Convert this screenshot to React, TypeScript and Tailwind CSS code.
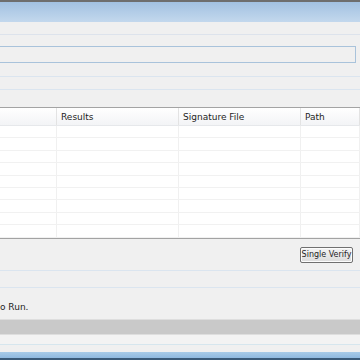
import React from "react";

const cols = [
  { label: "", w: "w-[57px]" },
  { label: "Results", w: "w-[122px]" },
  { label: "Signature File", w: "w-[122px]" },
  { label: "Path", w: "flex-1" },
];

const rows = Array.from({ length: 9 });

export default function App() {
  return (
    <div
      className="w-[360px] h-[360px] overflow-hidden flex flex-col bg-[#f0f0f0] text-[9px] text-[#1e1e1e]"
      style={{ fontFamily: "'DejaVu Sans', 'Liberation Sans', sans-serif" }}
    >
      {/* window top */}
      <div className="h-[2px] bg-[#6e6e6e]" />
      <div className="h-[20px] bg-gradient-to-b from-[#a2c1e1] to-[#c3d8ed]" />

      {/* form area */}
      <div className="h-[12px]" />
      <div className="h-px bg-[#dde3ec]" />
      <div className="h-[11px]" />
      <div className="h-[17px] mr-[4px] border border-[#a9c3db] border-l-0 bg-[#f0f0f0]" />
      <div className="h-[13px]" />
      <div className="h-px bg-[#dbe5ef]" />
      <div className="h-[12px]" />
      <div className="h-px bg-[#dbe5ef]" />
      <div className="h-[17px]" />

      {/* results table */}
      <div className="h-[132px] flex flex-col bg-white border-t border-b border-[#a3a3a3]">
        <div className="h-[18px] flex bg-gradient-to-b from-white to-[#f3f4f6] border-b border-[#e6e8eb]">
          {cols.map((c, i) => (
            <div
              key={i}
              className={`${c.w} flex items-center pl-[4px] pt-[2px] border-r border-[#e3e3e3] leading-none whitespace-nowrap`}
            >
              {c.label}
            </div>
          ))}
        </div>
        {rows.map((_, r) => (
          <div key={r} className="h-[12.4px] flex border-b border-[#f1f1f1]">
            {cols.map((c, i) => (
              <div key={i} className={`${c.w} border-r border-[#f0f0f0]`} />
            ))}
          </div>
        ))}
      </div>

      {/* buttons */}
      <div className="h-[31px] flex items-start justify-end pr-[7px] pt-[8px]">
        <button className="w-[53px] h-[16px] p-0 border border-[#707070] rounded-[2px] bg-gradient-to-b from-[#f4f4f4] to-[#dcdcdc] text-[8px] leading-none whitespace-nowrap shadow-[inset_0_0_0_1px_#fcfcfc]">
          Single Verify
        </button>
      </div>
      <div className="h-px bg-[#dbe5ef]" />
      <div className="h-[16px]" />
      <div className="h-px bg-[#dbe5ef]" />
      <div className="h-[31px] flex items-end pb-[7px] leading-none">
        <span>o Run.</span>
      </div>

      {/* status bar */}
      <div className="h-[16px] bg-[#c9c9c9] border-t border-[#dedede] border-b border-[#a6a6a6]" />
      <div className="h-[9px] bg-[#f3f3f3]" />
      <div className="h-px bg-[#d6e6ee]" />
      <div className="h-[7px] bg-[#f0f0f0]" />
      <div className="flex-1 bg-gradient-to-b from-[#a8cbe8] to-[#8fb9df] border-b-2 border-[#3a5a78]" />
    </div>
  );
}
